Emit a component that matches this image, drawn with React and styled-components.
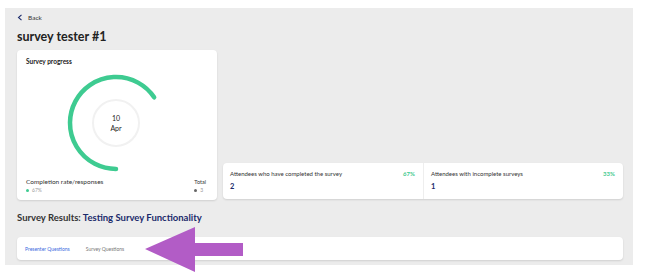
import React from "react";
import styled, { createGlobalStyle } from "styled-components";

const Global = createGlobalStyle`
  body {
    margin: 0;
    background: #ffffff;
    font-family: Lato, "Open Sans", sans-serif;
    color: #222;
  }
`;

const Page = styled.div`
  position: relative;
  width: 646px;
  height: 278px;
  overflow: hidden;
`;

const Panel = styled.div`
  margin: 8px 0 0 5px;
  width: 628px;
  height: 257px;
  box-sizing: border-box;
  background: #ececec;
  padding: 4px 10px 0 12px;
  display: flex;
  flex-direction: column;
`;

const BackRow = styled.div`
  display: flex;
  align-items: center;
  gap: 5px;
  height: 10px;
  font-size: 6.5px;
  color: #333;
`;

const Title = styled.h1`
  margin: 7px 0 0;
  font-size: 12.5px;
  font-weight: 700;
  line-height: 16px;
  color: #222;
`;

const Row = styled.div`
  display: flex;
  align-items: flex-end;
  gap: 6px;
  margin-top: 5px;
`;

const Card = styled.div`
  background: #fff;
  border-radius: 4px;
  box-shadow: 0 1px 2px rgba(0, 0, 0, 0.12);
`;

const ProgressCard = styled(Card)`
  width: 200px;
  height: 150px;
  box-sizing: border-box;
  padding: 8px 11px 6px 9px;
  display: flex;
  flex-direction: column;
`;

const CardTitle = styled.div`
  font-size: 6.5px;
  font-weight: 700;
  line-height: 8px;
`;

const Chart = styled.div`
  position: relative;
  width: 110px;
  height: 110px;
  margin: 2px auto 0;
  align-self: center;
`;

const ChartLabel = styled.div`
  position: absolute;
  inset: 0;
  display: flex;
  flex-direction: column;
  align-items: center;
  justify-content: center;
  font-size: 7px;
  line-height: 10px;
  color: #222;
`;

const Legend = styled.div`
  margin-top: auto;
  display: flex;
  justify-content: space-between;
  align-items: flex-end;
`;

const LegendItem = styled.div`
  display: flex;
  flex-direction: column;
  align-items: flex-start;
  gap: 1px;
`;

const LegendLabel = styled.div`
  font-size: ${(p) => (p.$small ? "5.5px" : "6.5px")};
  line-height: 8px;
  color: #333;
`;

const LegendValue = styled.div`
  display: flex;
  align-items: center;
  gap: 3px;
  font-size: 5px;
  line-height: 7px;
  color: #999;
`;

const Dot = styled.span`
  width: 3px;
  height: 3px;
  border-radius: 50%;
  background: ${(p) => p.$color};
`;

const StatsCard = styled(Card)`
  flex: 1;
  height: 36px;
  margin-bottom: 1px;
  display: grid;
  grid-template-columns: 1fr 1fr;
`;

const Stat = styled.div`
  padding: 7px 8px 0 7px;
  border-left: ${(p) => (p.$divider ? "1px solid #eeeeee" : "none")};
`;

const StatHead = styled.div`
  display: flex;
  justify-content: space-between;
  font-size: 6px;
  line-height: 8px;
  color: #333;
`;

const Percent = styled.span`
  color: #3ec98e;
  font-weight: 700;
`;

const StatValue = styled.div`
  margin-top: 4px;
  font-size: 7.5px;
  font-weight: 700;
  color: #1b2a6b;
`;

const Results = styled.h2`
  margin: 12px 0 0;
  font-size: 9.5px;
  line-height: 12px;
  font-weight: 700;
  color: #333;

  span {
    color: #1b2a6b;
  }
`;

const TabsCard = styled(Card)`
  margin-top: 13px;
  height: 23px;
  display: flex;
  align-items: center;
  padding-left: 8px;
  gap: 16px;
`;

const Tab = styled.div`
  font-size: 5px;
  color: ${(p) => (p.$active ? "#3b6be0" : "#777")};
`;

const Arrow = styled.svg`
  position: absolute;
  left: 145px;
  top: 227px;
`;

export default function App() {
  const cx = 55;
  const r = 46;
  const start = 180;
  const sweep = 236;
  const toXY = (deg) => {
    const a = (deg * Math.PI) / 180;
    return [cx + r * Math.sin(a), cx - r * Math.cos(a)];
  };
  const [sx, sy] = toXY(start);
  const [ex, ey] = toXY(start + sweep);

  return (
    <Page>
      <Global />
      <Panel>
        <BackRow>
          <svg width="6" height="7" viewBox="0 0 6 7">
            <path d="M4.5 0.8 L1.5 3.5 L4.5 6.2" fill="none" stroke="#1b2a6b" strokeWidth="1.1" />
          </svg>
          Back
        </BackRow>
        <Title>survey tester #1</Title>
        <Row>
          <ProgressCard>
            <CardTitle>Survey progress</CardTitle>
            <Chart>
              <svg width="110" height="110" viewBox="0 0 110 110">
                <circle cx={cx} cy={cx} r="23" fill="none" stroke="#f1f1f1" strokeWidth="2" />
                <path
                  d={`M${sx} ${sy} A${r} ${r} 0 1 1 ${ex} ${ey}`}
                  fill="none"
                  stroke="#3ecb91"
                  strokeWidth="4.5"
                  strokeLinecap="round"
                />
              </svg>
              <ChartLabel>
                <div>10</div>
                <div>Apr</div>
              </ChartLabel>
            </Chart>
            <Legend>
              <LegendItem>
                <LegendLabel>Completion rate/responses</LegendLabel>
                <LegendValue>
                  <Dot $color="#3ecb91" />
                  67%
                </LegendValue>
              </LegendItem>
              <LegendItem>
                <LegendLabel $small>Total</LegendLabel>
                <LegendValue>
                  <Dot $color="#666" />3
                </LegendValue>
              </LegendItem>
            </Legend>
          </ProgressCard>
          <StatsCard>
            <Stat>
              <StatHead>
                Attendees who have completed the survey
                <Percent>67%</Percent>
              </StatHead>
              <StatValue>2</StatValue>
            </Stat>
            <Stat $divider>
              <StatHead>
                Attendees with incomplete surveys
                <Percent>33%</Percent>
              </StatHead>
              <StatValue>1</StatValue>
            </Stat>
          </StatsCard>
        </Row>
        <Results>
          Survey Results: <span>Testing Survey Functionality</span>
        </Results>
        <TabsCard>
          <Tab $active>Presenter Questions</Tab>
          <Tab>Survey Questions</Tab>
        </TabsCard>
      </Panel>
      <Arrow width="100" height="47" viewBox="0 0 100 47">
        <polygon points="0,22 50,0 50,16 98,16 98,29 50,29 50,45" fill="#b25cc6" />
      </Arrow>
    </Page>
  );
}
